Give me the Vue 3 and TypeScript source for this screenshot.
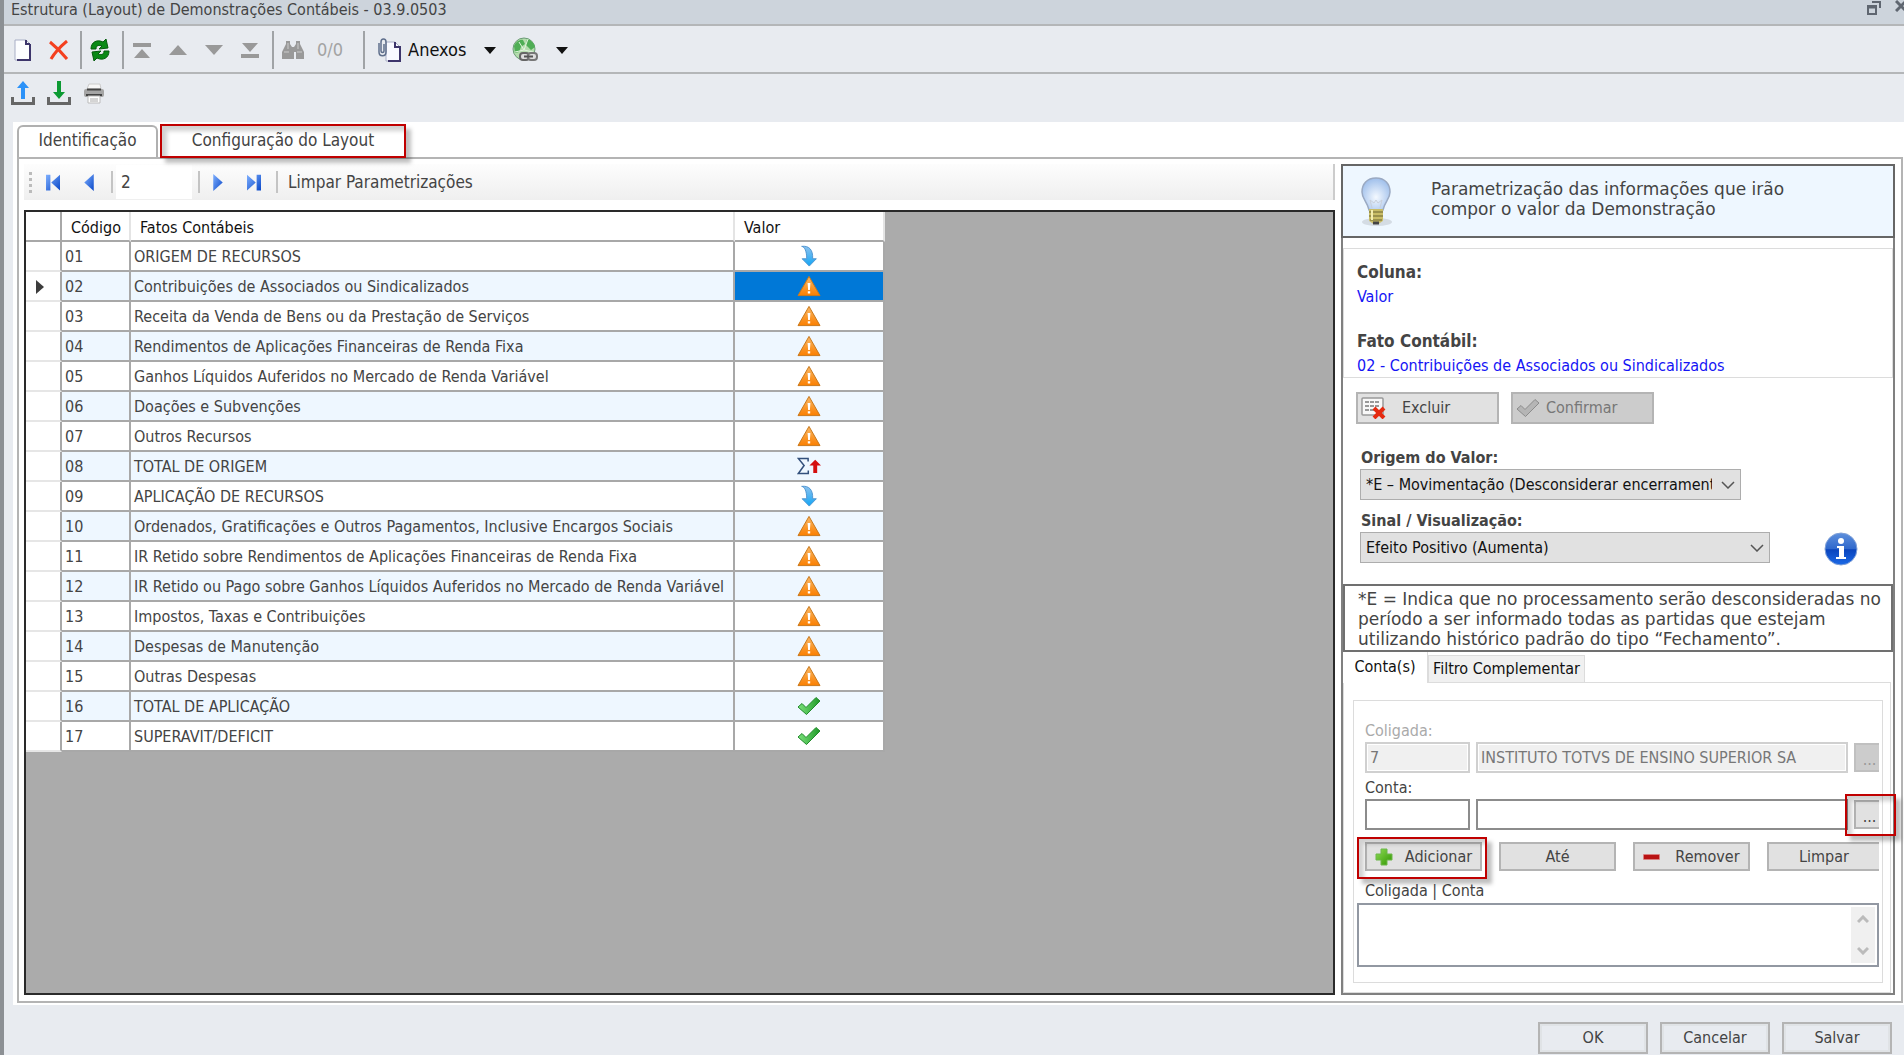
<script setup lang="ts">
import { ref } from 'vue'

type Status = 'down' | 'warn' | 'sum' | 'check'

interface Fact {
  code: string
  name: string
  status: Status
}

const facts: Fact[] = [
  { code: '01', name: 'ORIGEM DE RECURSOS', status: 'down' },
  { code: '02', name: 'Contribuições de Associados ou Sindicalizados', status: 'warn' },
  { code: '03', name: 'Receita da Venda de Bens ou da Prestação de Serviços', status: 'warn' },
  { code: '04', name: 'Rendimentos de Aplicações Financeiras de Renda Fixa', status: 'warn' },
  { code: '05', name: 'Ganhos Líquidos Auferidos no Mercado de Renda Variável', status: 'warn' },
  { code: '06', name: 'Doações e Subvenções', status: 'warn' },
  { code: '07', name: 'Outros Recursos', status: 'warn' },
  { code: '08', name: 'TOTAL DE ORIGEM', status: 'sum' },
  { code: '09', name: 'APLICAÇÃO DE RECURSOS', status: 'down' },
  { code: '10', name: 'Ordenados, Gratificações e Outros Pagamentos, Inclusive Encargos Sociais', status: 'warn' },
  { code: '11', name: 'IR Retido sobre Rendimentos de Aplicações Financeiras de Renda Fixa', status: 'warn' },
  { code: '12', name: 'IR Retido ou Pago sobre Ganhos Líquidos Auferidos no Mercado de Renda Variável', status: 'warn' },
  { code: '13', name: 'Impostos, Taxas e Contribuições', status: 'warn' },
  { code: '14', name: 'Despesas de Manutenção', status: 'warn' },
  { code: '15', name: 'Outras Despesas', status: 'warn' },
  { code: '16', name: 'TOTAL DE APLICAÇÃO', status: 'check' },
  { code: '17', name: 'SUPERAVIT/DEFICIT', status: 'check' },
]

const selected = ref('02')
const position = ref('2')
const account = ref('')
const accountName = ref('')
const accountList = ref('')
</script>

<template>
  <div class="window">
    <svg class="defs" width="0" height="0" aria-hidden="true">
      <defs>
        <linearGradient id="gOrange" x1="0" y1="0" x2="0" y2="1">
          <stop offset="0" stop-color="#f9b865" /><stop offset="1" stop-color="#fb7f00" />
        </linearGradient>
        <linearGradient id="gBlue" x1="0" y1="0" x2="0" y2="1">
          <stop offset="0" stop-color="#8cc2ee" /><stop offset="1" stop-color="#12a5f5" />
        </linearGradient>
        <linearGradient id="gNav" x1="0" y1="0" x2="1" y2="1">
          <stop offset="0" stop-color="#7fb0ff" /><stop offset="1" stop-color="#0a48c8" />
        </linearGradient>
        <linearGradient id="gGreen" x1="0" y1="0" x2="1" y2="0">
          <stop offset="0" stop-color="#7be27b" /><stop offset="1" stop-color="#1f9a28" />
        </linearGradient>
        <linearGradient id="gPlus" x1="0" y1="0" x2="1" y2="1">
          <stop offset="0" stop-color="#8fdc55" /><stop offset="1" stop-color="#2f9400" />
        </linearGradient>
        <linearGradient id="gInfo" x1="0" y1="0" x2="0" y2="1">
          <stop offset="0" stop-color="#5d8fdc" /><stop offset=".5" stop-color="#2f68cc" />
          <stop offset=".52" stop-color="#0a44bd" /><stop offset="1" stop-color="#1c6ae6" />
        </linearGradient>
        <radialGradient id="gBulb" cx=".5" cy=".6" r=".6">
          <stop offset="0" stop-color="#f4f9ff" /><stop offset="1" stop-color="#9fbfeb" />
        </radialGradient>
        <symbol id="warn" viewBox="0 0 24 22">
          <path d="M12 1.400 23 20.600H1z" fill="url(#gOrange)" stroke="#c9791c" stroke-linejoin="round" />
          <path d="M10.600 8h2.800l-.5 7h-1.800zM10.800 16.300h2.400v2.200h-2.400z" fill="#fff" />
        </symbol>
        <symbol id="down" viewBox="0 0 24 24">
          <path d="M4 1.500C7 2 9.500 6 9.500 15H4.500l7.800 8 7.700-8h-4C16.500 5 12 .5 4 1.500z" fill="url(#gBlue)" stroke="#4a92cf" stroke-linejoin="round" />
        </symbol>
        <symbol id="check" viewBox="0 0 24 20">
          <path d="M1 11l4-3.500 4 4L19 1.500 23 5 9.500 18.500z" fill="url(#gGreen)" stroke="#218a2c" stroke-linejoin="round" />
        </symbol>
        <symbol id="sum" viewBox="0 0 27 20">
          <path d="M12.500 5V1.500H1.500L8 9.500l-6.500 9h11.200V15" fill="none" stroke="#33507c" stroke-width="1.700" />
          <path d="M20.500 3l6.500 6.500h-4.300V18h-4.400V9.500H14z" fill="#d40f0f" />
        </symbol>
      </defs>
    </svg>

    <header class="title">
      <h1>Estrutura (Layout) de Demonstrações Contábeis - 03.9.0503</h1>
      <span class="controls">
        <button type="button" aria-label="Restaurar">
          <svg width="14" height="15" viewBox="0 0 14 15"><path d="M1 6h8v8H1zM1 7.500h8M5 2h8v6" fill="none" stroke="#5f6670" stroke-width="2" /></svg>
        </button>
        <button type="button" aria-label="Fechar">
          <svg width="12" height="12" viewBox="0 0 12 12"><path d="M1 1l10 10M11 1L1 11" stroke="#5f6670" stroke-width="3" /></svg>
        </button>
      </span>
    </header>

    <div class="bar main-bar">
      <button type="button" class="new" aria-label="Novo">
        <svg width="17" height="22" viewBox="0 0 17 22"><path d="M1 1h11l4 4v16H1z" fill="#fcfdff" stroke="#a8aec6" /><path d="M12 1v4h4M16 5v16H3" fill="none" stroke="#3d356b" stroke-width="2" /></svg>
      </button>
      <button type="button" class="delete" aria-label="Excluir registro">
        <svg width="20" height="20" viewBox="0 0 20 20"><path d="M1 2C6 6 13 13 18 19M18 1C12 6 6 12 2 19" fill="none" stroke="#f4401f" stroke-width="3" /></svg>
      </button>
      <i class="sep"></i>
      <button type="button" class="w36" aria-label="Atualizar">
        <svg width="20" height="24" viewBox="0 0 20 24"><path d="M1 11C1 4 7 1 13 4l3-3 2 9-9 1 3-3C9 7 6 7 6 11zM19 13c0 7-6 10-12 7l-3 3-2-9 9-1-3 3c3 1 6 1 6-3z" fill="#0a8a16" stroke="#045c0c" /></svg>
      </button>
      <i class="sep"></i>
      <button type="button" class="w36" aria-label="Primeiro registro">
        <svg width="20" height="17" viewBox="0 0 20 17"><path d="M1 1h18v4H1zM10 7l8 9H2z" fill="#999" /></svg>
      </button>
      <button type="button" class="w36" aria-label="Registro anterior">
        <svg width="18" height="10" viewBox="0 0 18 10"><path d="M9 0l9 10H0z" fill="#999" /></svg>
      </button>
      <button type="button" class="w36" aria-label="Próximo registro">
        <svg width="18" height="10" viewBox="0 0 18 10"><path d="M0 0h18l-9 10z" fill="#999" /></svg>
      </button>
      <button type="button" class="w36" aria-label="Último registro">
        <svg width="20" height="17" viewBox="0 0 20 17"><path d="M1 12h18v4H1zM2 1h16l-8 9z" fill="#999" /></svg>
      </button>
      <i class="sep"></i>
      <button type="button" class="find" disabled>
        <svg width="24" height="20" viewBox="0 0 24 20"><path d="M5 1h4v3l2 3h2l2-3V1h4v3l4 8v7h-8v-7h-2v7H1v-7l4-8z" fill="#999" /><path d="M3 12h5M16 12h5M7 3v6M17 3v6" stroke="#ccc" /></svg>
        <span>0/0</span>
      </button>
      <i class="sep"></i>
      <button type="button" class="attach">
        <svg width="25" height="24" viewBox="0 0 25 24"><path d="M9 4h9l5 5v14H9z" fill="#f8f9ff" stroke="#a8aec6" /><path d="M18 4v5h5v14H11" fill="none" stroke="#3d356b" stroke-width="2" /><path d="M2 5v9c0 5 7 5 7 0V4c0-4-5-4-5 0v9c0 2 3 2 3 0V6" fill="none" stroke="#5f6f8c" stroke-width="1.500" /></svg>
        <span>Anexos</span>
        <svg width="12" height="7" viewBox="0 0 12 7"><path d="M0 0h12L6 7z" fill="#111" /></svg>
      </button>
      <button type="button" class="globe" aria-label="Links">
        <svg width="26" height="26" viewBox="0 0 26 26"><circle cx="12" cy="12" r="11" fill="#b5dcae" stroke="#6b9c76" /><path d="M2 9C4 4 9 2 11 3l2 4-4 3-2 5-4 1zM15 2c4 1 7 4 8 8l-4 3-5-5z" fill="#4fae55" /><path d="M7 5l5 8 9 2M3 15l9-2 4-11" fill="none" stroke="#e3f5df" /><rect x="8" y="16" width="9" height="7" rx="3" fill="#ddd" stroke="#666" stroke-width="2" /><rect x="16" y="16" width="9" height="7" rx="3" fill="#ddd" stroke="#777" stroke-width="2" /><path d="M12 19.500h9" stroke="#555" stroke-width="2" /></svg>
        <svg width="12" height="7" viewBox="0 0 12 7"><path d="M0 0h12L6 7z" fill="#111" /></svg>
      </button>
    </div>

    <div class="bar file-bar">
      <button type="button" aria-label="Exportar">
        <svg width="24" height="26" viewBox="0 0 24 26"><path d="M1.500 17v6.500h21V17" fill="none" stroke="#666" stroke-width="3" /><path d="M12 1l6 7h-4v11h-4V8H6z" fill="#2c92f8" /></svg>
      </button>
      <button type="button" aria-label="Importar">
        <svg width="24" height="26" viewBox="0 0 24 26"><path d="M1.500 17v6.500h21V17" fill="none" stroke="#666" stroke-width="3" /><path d="M12 19l6-7h-4V1h-4v11H6z" fill="#0c9a33" /></svg>
      </button>
      <button type="button" aria-label="Imprimir">
        <svg width="22" height="22" viewBox="0 0 22 22"><path d="M6 2h11l1 5H4z" fill="#f7f7f7" stroke="#ccc" /><rect x="1" y="7" width="20" height="8" rx="2" fill="#a5a5a5" /><path d="M4 7.500h14M3 13h16" stroke="#444" stroke-width="2" /><path d="M5 14h12v7H5z" fill="#fff" stroke="#bbb" /><path d="M7 17h8M7 19h8" stroke="#aaa" /></svg>
      </button>
    </div>

    <main class="page">
      <nav class="tabs">
        <button type="button" class="tab tab-id">Identificação</button>
        <button type="button" class="tab tab-layout marked">Configuração do Layout</button>
      </nav>

      <div class="body">
        <section class="left">
          <div class="nav-bar">
            <svg class="grip" width="3" height="21" viewBox="0 0 3 21"><path d="M0 0h3v3H0zM0 6h3v3H0zM0 12h3v3H0zM0 18h3v3H0z" fill="#bbb" /></svg>
            <button type="button" class="w36" aria-label="Primeiro">
              <svg width="14" height="17" viewBox="0 0 16 18"><path d="M0 0h5v18H0zM16 0v18L6 9z" fill="url(#gNav)" /></svg>
            </button>
            <button type="button" class="w36" aria-label="Anterior">
              <svg width="10" height="17" viewBox="0 0 10 18"><path d="M10 0v18L0 9z" fill="url(#gNav)" /></svg>
            </button>
            <i class="sep"></i>
            <input v-model="position" class="pos" type="text" aria-label="Posição" />
            <i class="sep"></i>
            <button type="button" class="w36" aria-label="Próximo">
              <svg width="10" height="17" viewBox="0 0 10 18"><path d="M0 0v18l10-9z" fill="url(#gNav)" /></svg>
            </button>
            <button type="button" class="w36" aria-label="Último">
              <svg width="14" height="17" viewBox="0 0 16 18"><path d="M11 0h5v18h-5zM0 0v18l10-9z" fill="url(#gNav)" /></svg>
            </button>
            <i class="sep"></i>
            <button type="button" class="clear">Limpar Parametrizações</button>
          </div>

          <div class="grid">
            <table>
              <thead>
                <tr>
                  <th class="c-head"></th>
                  <th class="c-code">Código</th>
                  <th class="c-name">Fatos Contábeis</th>
                  <th class="c-value">Valor</th>
                </tr>
              </thead>
              <tbody>
                <tr v-for="f in facts" :key="f.code" :class="{ current: f.code === selected }" @click="selected = f.code">
                  <td class="rowhead">
                    <svg v-if="f.code === selected" width="8" height="14" viewBox="0 0 8 14"><path d="M0 0l8 7-8 7z" fill="#3c3c3c" /></svg>
                  </td>
                  <td>{{ f.code }}</td>
                  <td>{{ f.name }}</td>
                  <td class="value"><svg :class="f.status" :aria-label="f.status"><use :href="'#' + f.status" /></svg></td>
                </tr>
              </tbody>
            </table>
          </div>
        </section>

        <aside class="side">
          <div class="hint">
            <svg width="34" height="52" viewBox="0 0 34 52"><ellipse cx="18" cy="46" rx="15" ry="4" fill="#c9d0d8" opacity=".7" /><path d="M17 2C8 2 3 8 3 16c0 7 5 9 7 18h14c2-9 7-11 7-18C31 8 26 2 17 2z" fill="url(#gBulb)" stroke="#9aa9c2" stroke-width="1.500" /><path d="M13 32l-2-8 4 3 2-3 2 3 4-3-2 8" fill="none" stroke="#c8cfda" /><path d="M10 33h14v11c0 2-3 2-4 4h-6c-1-2-4-2-4-4z" fill="#c9bd68" /><path d="M10 36h14M10 40h14M11 44h12" stroke="#8b8344" stroke-width="1.500" /><path d="M13 34v10" stroke="#f3edb0" stroke-width="2" /><path d="M14 47h6" stroke="#444" stroke-width="3" /></svg>
            <p>Parametrização das informações que irão<br />compor o valor da Demonstração</p>
          </div>

          <div class="facts">
            <h2>Coluna:</h2>
            <p>Valor</p>
            <h2>Fato Contábil:</h2>
            <p>02 - Contribuições de Associados ou Sindicalizados</p>
          </div>

          <div class="form">
            <div class="actions">
              <button type="button" class="btn">
                <svg width="25" height="22" viewBox="0 0 25 22"><rect x="1" y="1" width="21" height="17" rx="1" fill="#f8f8f8" stroke="#999" stroke-width="1.500" /><path d="M4 5h15M4 9h15M4 13h10" stroke="#999" stroke-width="2" stroke-dasharray="4 1" /><path d="M13 11l10 10M23 11L13 21" stroke="#e52a10" stroke-width="4" /></svg>
                <span>Excluir</span>
              </button>
              <button type="button" class="btn confirm" disabled>
                <svg width="24" height="20" viewBox="0 0 24 20"><path d="M1 11l4-3.500 4 4L19 1.500 23 5 9.500 18.500z" fill="#b5b5b5" stroke="#8c8c8c" /></svg>
                <span>Confirmar</span>
              </button>
            </div>

            <label class="strong" for="origin">Origem do Valor:</label>
            <span class="combo origin">
              <select id="origin"><option>*E – Movimentação (Desconsiderar encerramento)</option></select>
              <svg width="14" height="8" viewBox="0 0 14 8"><path d="M1 1l6 6 6-6" fill="none" stroke="#555" stroke-width="1.500" /></svg>
            </span>
            <label class="strong" for="sign">Sinal / Visualização:</label>
            <div class="sign-row">
              <span class="combo sign">
                <select id="sign"><option>Efeito Positivo (Aumenta)</option></select>
                <svg width="14" height="8" viewBox="0 0 14 8"><path d="M1 1l6 6 6-6" fill="none" stroke="#555" stroke-width="1.500" /></svg>
              </span>
              <svg width="34" height="34" viewBox="0 0 34 34"><circle cx="17" cy="17" r="16" fill="url(#gInfo)" stroke="#7fa0d8" /><circle cx="17" cy="9" r="3" fill="#fff" /><path d="M13 14h7v11h2v2H12v-2h3v-9h-2z" fill="#fff" /></svg>
            </div>
          </div>

          <p class="note">*E = Indica que no processamento serão desconsideradas no período a ser informado todas as partidas que estejam utilizando histórico padrão do tipo “Fechamento”.</p>

          <div class="subtabs">
            <button type="button" class="on">Conta(s)</button>
            <button type="button" class="off">Filtro Complementar</button>
            <i></i>
          </div>

          <div class="subpage">
            <div class="group">
              <label class="dim" for="company">Coligada:</label>
              <div class="fields">
                <input id="company" class="short" type="text" value="7" disabled />
                <input class="long" type="text" value="INSTITUTO TOTVS DE ENSINO SUPERIOR SA" aria-label="Nome da coligada" disabled />
                <button type="button" class="more" disabled>...</button>
              </div>
              <label for="account">Conta:</label>
              <div class="fields">
                <input id="account" v-model="account" class="short" type="text" />
                <input v-model="accountName" class="long" type="text" aria-label="Nome da conta" />
                <span class="more-wrap marked"><button type="button" class="more">...</button></span>
              </div>
              <div class="ops">
                <span class="add-wrap marked">
                  <button type="button" class="btn add">
                    <svg width="18" height="18" viewBox="0 0 18 18"><path d="M6 1h6v5h5v6h-5v5H6v-5H1V6h5z" fill="url(#gPlus)" stroke="#6cb74a" stroke-linejoin="round" /></svg>
                    <span>Adicionar</span>
                  </button>
                </span>
                <button type="button" class="btn plain">Até</button>
                <button type="button" class="btn remove">
                  <svg width="17" height="6" viewBox="0 0 17 6"><rect width="17" height="6" rx="1" fill="#d98080" /><rect x="1" y="1" width="15" height="4" fill="#b91313" /></svg>
                  <span>Remover</span>
                </button>
                <button type="button" class="btn plain last">Limpar</button>
              </div>
              <label class="list-label" for="accounts">Coligada | Conta</label>
              <div class="list">
                <textarea id="accounts" v-model="accountList"></textarea>
                <span class="scroll">
                  <svg width="12" height="9" viewBox="0 0 12 9"><path d="M1 7l5-5 5 5" fill="none" stroke="#bbb" stroke-width="3" /></svg>
                  <svg width="12" height="9" viewBox="0 0 12 9"><path d="M1 2l5 5 5-5" fill="none" stroke="#bbb" stroke-width="3" /></svg>
                </span>
              </div>
            </div>
          </div>
        </aside>
      </div>
    </main>

    <footer class="footer">
      <button type="button">OK</button>
      <button type="button">Cancelar</button>
      <button type="button">Salvar</button>
    </footer>
  </div>
</template>

<style>
body {
  margin: 0;
  overflow: hidden;
}
</style>

<style scoped>
.window,
.window * {
  box-sizing: border-box;
}
.window {
  display: flex;
  flex-direction: column;
  min-height: 100vh;
  border-left: 4px solid #8c9094;
  background: #e8ebf0;
  color: #444;
  font: 16px/20px "DejaVu Sans Condensed", "Noto Sans", sans-serif;
}
svg {
  display: block;
  flex: none;
}
p,
h1,
h2 {
  margin: 0;
}
button,
input,
select,
textarea {
  margin: 0;
  font: inherit;
  color: inherit;
  border-radius: 0;
}
button {
  display: flex;
  align-items: center;
  justify-content: center;
  padding: 0;
  border: 0;
  background: none;
  white-space: nowrap;
}
.title {
  display: flex;
  justify-content: space-between;
  height: 26px;
  padding-left: 7px;
  border-bottom: 2px solid #b4b6b8;
  background: #cdd4dc;
}
.title h1 {
  font-size: 16px;
  line-height: 19px;
  font-weight: 400;
}
.controls {
  display: flex;
  align-items: flex-start;
  gap: 14px;
  margin-right: -3px;
}
.bar {
  display: flex;
  align-items: center;
}
.main-bar {
  height: 48px;
  padding: 2px 0 0 4px;
  border-bottom: 2px solid #b4b6b8;
}
.file-bar {
  height: 48px;
  gap: 12px;
  padding: 0 7px 10px;
}
.sep {
  width: 2px;
  height: 38px;
  background: #a0a3a6;
}
.new {
  width: 28px;
}
.delete {
  width: 42px;
  margin-left: 2px;
}
.w36 {
  width: 36px;
}
.w36 + .sep {
  margin-left: 4px;
}
.find {
  gap: 12px;
  padding: 0 20px 0 7px;
  color: #a3a3a3;
  font-size: 18px;
}
.attach {
  gap: 6px;
  padding-left: 12px;
  color: #111;
  font-size: 18px;
}
.attach span {
  margin-right: 12px;
}
.globe {
  gap: 18px;
  margin-left: 16px;
}

.page {
  display: flex;
  flex: 1;
  flex-direction: column;
  margin-left: 9px;
  padding: 3px 1px 2px 4px;
  background: #fff;
}
.tabs {
  display: flex;
  gap: 3px;
  height: 32px;
}
.tab {
  padding-bottom: 4px;
  font-size: 17px;
}
.tab-id {
  width: 141px;
  border: 2px solid #b0b0b0;
  border-bottom: 0;
  border-radius: 6px 6px 0 0;
}
.tab-layout {
  width: 244px;
  padding-bottom: 2px;
}
.marked {
  position: relative;
}
.marked::after {
  content: "";
  position: absolute;
  border: 2px solid #c00000;
  box-shadow: 5px 5px 4px rgba(0, 0, 0, 0.25), inset 5px 5px 4px rgba(0, 0, 0, 0.18);
  pointer-events: none;
}
.tab-layout::after {
  inset: -1px;
}
.body {
  display: flex;
  flex: 1;
  gap: 6px;
  padding: 5px 6px 6px 5px;
  border: 2px solid #b4b4b4;
}
.left {
  display: flex;
  flex: 1;
  flex-direction: column;
  min-width: 0;
}
.nav-bar {
  display: flex;
  align-items: center;
  height: 36px;
  margin-bottom: 10px;
  padding-left: 5px;
  border-right: 2px solid #ccc;
  background: linear-gradient(#fdfdfd, #efefef);
}
.nav-bar .sep {
  height: 22px;
  background: #c4c4c4;
}
.grip {
  margin-right: 3px;
}
.pos {
  width: 76px;
  height: 34px;
  margin: 0 6px 0 3px;
  padding: 0 5px;
  border: 0;
  background: #fff;
  font-size: 17px;
}
.clear {
  margin-left: 10px;
  font-size: 17px;
}
.grid {
  flex: 1;
  border: 2px solid #2a2a2a;
  background: #ababab;
}
table {
  width: 859px;
  table-layout: fixed;
  border-collapse: separate;
  border-spacing: 0;
  background: #fff;
}
th,
td {
  height: 30px;
  padding: 2px 3px 0;
  border-right: 2px solid #a8a8a8;
  border-bottom: 2px solid #a8a8a8;
  text-align: left;
  font-weight: 400;
  white-space: nowrap;
}
th {
  padding: 3px 9px 0;
  border-right-color: #e4e4e4;
  color: #111;
}
th.c-head {
  border-right-color: #a8a8a8;
}
.c-head {
  width: 36px;
}
.c-code {
  width: 69px;
}
.c-name {
  width: 604px;
}
tbody tr:nth-child(even) td {
  background: #eef7ff;
}
tbody tr td.rowhead {
  padding-left: 10px;
  border-bottom-color: #e6e6e6;
  background: #fff;
}
tbody tr.current td.value {
  background: #0078d7;
}
.value {
  padding-top: 0;
}
.value svg {
  width: 24px;
  height: 22px;
  margin: 0 auto;
}

.side {
  display: flex;
  flex: none;
  flex-direction: column;
  width: 554px;
  border: 2px solid #808080;
}
.hint {
  display: flex;
  align-items: flex-start;
  gap: 38px;
  height: 74px;
  margin: -2px -2px 0;
  padding: 10px 16px;
  border: 2px solid #666;
  background: #eef7ff;
}
.hint p,
.note {
  font: 17px/20px "DejaVu Sans", sans-serif;
}
.hint p {
  padding-top: 3px;
}
.facts {
  height: 130px;
  margin-top: 10px;
  padding: 10px 13px 0;
  border: 1px solid #dcdcdc;
}
.facts h2 {
  font-size: 17px;
  line-height: 26px;
}
.facts p {
  color: #1414f5;
  line-height: 24px;
}
.facts p + h2 {
  margin-top: 19px;
}
.form {
  height: 206px;
  padding: 14px 13px 0;
}
.actions {
  display: flex;
  gap: 12px;
  margin-bottom: 23px;
}
.btn {
  border: 2px solid #b4b4b4;
  background: #e1e1e1;
}
.actions .btn {
  justify-content: flex-start;
  gap: 16px;
  width: 143px;
  height: 32px;
  padding-left: 3px;
}
.actions .confirm {
  gap: 6px;
  background: #ccc;
}
.actions .confirm span {
  color: #777;
}
.strong {
  display: block;
  padding-left: 5px;
  font-weight: 700;
  line-height: 22px;
}
.combo {
  display: block;
  position: relative;
  height: 31px;
  margin: 0 0 10px 4px;
}
.combo select {
  width: 100%;
  height: 100%;
  padding: 0 28px 0 5px;
  border: 1px solid #adadad;
  background: #e1e1e1;
  color: #111;
  appearance: none;
}
.combo svg {
  position: absolute;
  right: 6px;
  top: 12px;
}
.origin {
  width: 381px;
}
.sign {
  width: 410px;
}
.sign-row {
  display: flex;
  gap: 54px;
}
.note {
  height: 68px;
  padding: 3px 0 0 13px;
  border: 2px solid #707070;
}
.subtabs {
  display: flex;
  align-items: flex-end;
  height: 31px;
}
.subtabs button {
  color: #111;
}
.subtabs .on {
  width: 85px;
  height: 31px;
  padding-bottom: 2px;
  border-right: 1px solid #dcdcdc;
}
.subtabs .off {
  width: 157px;
  height: 28px;
  border: 1px solid #dcdcdc;
  background: #f0f0f0;
}
.subtabs i {
  flex: 1;
  margin-right: 2px;
  border-bottom: 1px solid #dcdcdc;
}
.subpage {
  flex: 1;
  margin-right: 2px;
  padding: 17px 7px 9px 9px;
  border: 1px solid #dcdcdc;
  border-top: 0;
}
.group {
  height: 100%;
  padding: 19px 3px 0;
  border: 1px solid #dcdcdc;
}
.group label {
  display: block;
  margin-left: 8px;
  line-height: 22px;
}
.group .dim {
  color: #aaa;
}
.fields {
  display: flex;
  align-items: center;
  gap: 6px;
  margin: 0 0 4px 8px;
}
.fields input {
  height: 31px;
  padding: 0 3px;
  border: 2px solid #8c8c8c;
  background: #fff;
}
.fields input:disabled {
  border-color: #d0d0d0;
  background: #f0f0f0;
  box-shadow: inset 0 0 0 1px #fff;
  color: #777;
}
.short {
  width: 105px;
}
.long {
  flex: 1;
  min-width: 0;
}
.more {
  width: 25px;
  height: 29px;
  padding: 4px 0 0 4px;
  border: 2px solid #b4b4b4;
  border-right: 0;
  background: #e1e1e1;
}
.more:disabled {
  border-color: #c0c0c0;
  background: #ccc;
  color: #999;
}
.more-wrap::after {
  inset: -6px -17px -7px -9px;
}
.ops {
  display: flex;
  gap: 17px;
  margin: 12px 0 8px 8px;
}
.ops .btn {
  width: 117px;
  height: 29px;
}
.ops .add {
  gap: 12px;
}
.ops .remove {
  gap: 15px;
}
.ops .last {
  flex: 1;
  border-right: 0;
}
.add-wrap::after {
  inset: -5px -5px -8px -8px;
}
.group .list-label {
  line-height: 24px;
}
.list {
  display: flex;
  height: 64px;
  border: 2px solid #9298a2;
}
.list textarea {
  flex: 1;
  padding: 4px;
  border: 0;
  resize: none;
}
.scroll {
  display: flex;
  flex-direction: column;
  justify-content: space-between;
  align-items: center;
  width: 24px;
  margin: 2px;
  padding: 8px 0;
  background: #f0f0f0;
}

.footer {
  display: flex;
  justify-content: flex-end;
  gap: 12px;
  height: 50px;
  padding: 17px 12px 0;
}
.footer button {
  width: 110px;
  height: 32px;
  border: 2px solid #b4b4b4;
  box-shadow: inset 0 0 0 2px #e0e3e6;
}
</style>
